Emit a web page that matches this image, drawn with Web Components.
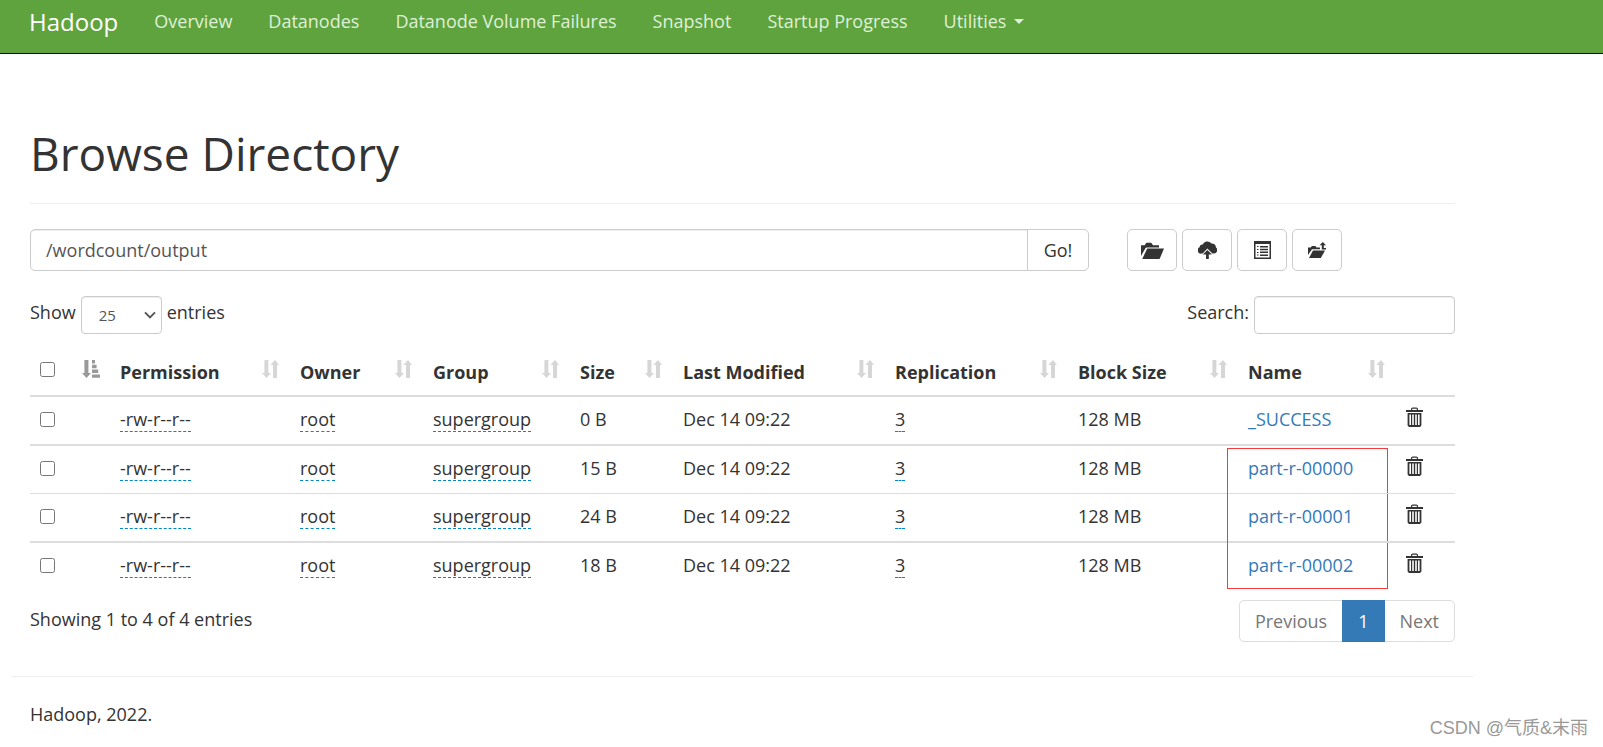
<!DOCTYPE html>
<html lang="en">
<head>
<meta charset="utf-8">
<meta name="viewport" content="width=device-width, initial-scale=1">
<title>Browsing HDFS</title>
<style>
  :root {
    --text: #333;
    --line: #ddd;
    --control: #ccc;
    --link: #337ab7;
    --brand: #5fa33e;
  }
  body {
    margin: 0;
    background: #fff;
    color: var(--text);
    font: 18px/27px "Open Sans", "Noto Sans", "Noto Sans CJK SC", sans-serif;
  }
</style>
</head>
<body>
<hdfs-app></hdfs-app>

<script>
const define = (name, html, setup) => {
  const template = document.createElement('template');
  template.innerHTML = html;
  customElements.define(name, class extends HTMLElement {
    constructor() {
      super();
      this.attachShadow({ mode: 'open' }).append(template.content.cloneNode(true));
    }
    connectedCallback() {
      if (setup) setup(this, this.shadowRoot);
    }
  });
};

/* Icon set: name -> [width, height, markup] */
const ICONS = {
  folder: [23, 17, '<path d="M0 14V3.2h3.6L5.4.8h4.8L12 3.2h6v2.2H5.6L4.6 6 0 14z"/><path d="M6.2 6.6H23L18.6 17H1.2z"/>'],
  upload: [19, 18, '<path d="M3.3 12.6A3.3 3.3 0 0 1 1.6 6.3 3 3 0 0 1 4.6 3.4 5.3 5.3 0 0 1 13.6 2.6 4.4 4.4 0 0 1 18 6.6a3.4 3.4 0 0 1-2 6L14.4 12.6 9.4 7.4 4.6 12.6z"/><path d="M9.4 9L14 13.6h-3.2V18H8v-4.4H4.8z"/>'],
  list: [17, 18, '<path fill-rule="evenodd" d="M0 0h17v18H0zM1.5 3v13.5h14V3z"/><path d="M3 5h1.5v1H3zM6 5h8v1.5H6zM3 8h1.5v1H3zM6 7.8h8v1.5H6zM3 11h1.5v1H3zM6 10.6h8v1.5H6zM3 13.6h1.5v1H3zM6 13.4h8v1.5H6z"/>'],
  move: [19, 16, '<path d="M0 13V5.6h2.6L4 4h3.4l1.2 1.6H12v1.6H4L0 13z"/><path d="M5 8.6h12L12.8 16H1z"/><path d="M14.8 0l3.2 3.2h-2.2V6H18v1.6h-4.2V3.2h-2.2z"/>'],
  trash: [17, 20, '<path d="M0 3h5V1.6L6.4.4h4.2L12 1.6V3h5v2H0zM6.2 3h4.6V1.8H6.2z" fill-rule="evenodd"/><path fill-rule="evenodd" d="M1.6 6h13.8v12.6L14 20H3l-1.4-1.4zM3.4 7.4v10.6h1.6v-10.6zM6.2 7.4v10.6h1.6v-10.6zM9.2 7.4v10.6h1.6v-10.6zM12 7.4v10.6h1.6v-10.6z"/>'],
  sort: [17, 18, '<path d="M2.4 0h4v13H9L4.5 18 0 13h2.4z"/><path d="M11 18V5H8.4L13 0l4 5h-2v13z"/>'],
  sorted: [18, 18, '<path d="M2.4 0h4v13H9L4.5 18 0 13h2.4z"/><path d="M10 0h3v3.4h-3zM10 4.8h4.6v3.4H10zM10 9.6h6.2V13H10zM10 14.4h8v3.4h-8z"/>'],
  chevron: [12, 8, '<path d="M1 1.4l5 5 5-5" fill="none" stroke="currentColor" stroke-width="2"/>'],
  caret: [10, 5, '<path d="M0 0h10L5 5z"/>']
};

define('glyph-icon', `
  <style>
    :host { display: inline-block; line-height: 0; }
    svg { display: block; fill: currentColor; }
  </style>`,
  (host, root) => {
    const [w, h, art] = ICONS[host.getAttribute('name')];
    root.innerHTML += `<svg width="${w}" height="${h}" viewBox="0 0 ${w} ${h}" aria-hidden="true">${art}</svg>`;
  });

define('nav-link', `
  <style>
    :host { display: block; }
    a { display: flex; align-items: center; gap: 8px; color: #dff0d8; text-decoration: none; white-space: nowrap; }
  </style>
  <a href="#"><slot></slot></a>`);

define('nav-bar', `
  <style>
    :host { display: block; background: var(--brand); border-bottom: 1px solid #080808; }
    nav { display: flex; gap: 36px; padding: 8px 29px 18px; }
    .brand { color: #fff; font-size: 24px; text-decoration: none; }
    .links { display: flex; gap: 36px; }
  </style>
  <nav>
    <a class="brand" href="#">Hadoop</a>
    <div class="links">
      <nav-link>Overview</nav-link>
      <nav-link>Datanodes</nav-link>
      <nav-link>Datanode Volume Failures</nav-link>
      <nav-link>Snapshot</nav-link>
      <nav-link>Startup Progress</nav-link>
      <nav-link>Utilities <glyph-icon name="caret"></glyph-icon></nav-link>
    </div>
  </nav>`);

define('page-title', `
  <style>
    :host { display: block; border-bottom: 1px solid #eee; padding-bottom: 24px; }
    h1 { margin: 0; font-size: 46px; line-height: 52px; font-weight: 400; }
  </style>
  <h1><slot></slot></h1>`);

define('icon-button', `
  <style>
    :host { display: block; }
    button {
      display: flex; align-items: center; justify-content: center;
      width: 50px; height: 42px; padding: 0;
      color: var(--text); background: #fff;
      border: 1px solid var(--control); border-radius: 5px;
    }
  </style>
  <button type="button"></button>`,
  (host, root) => {
    const icon = document.createElement('glyph-icon');
    icon.setAttribute('name', host.getAttribute('icon'));
    const button = root.querySelector('button');
    button.replaceChildren(icon);
    button.setAttribute('aria-label', host.getAttribute('label'));
  });

define('path-bar', `
  <style>
    :host { display: flex; }
    form { display: flex; flex: 1; margin-right: 38px; }
    input {
      flex: 1; min-width: 0; box-sizing: border-box; height: 42px; padding: 0 15px;
      font: inherit; color: #555; background: #fff;
      border: 1px solid var(--control); border-radius: 5px 0 0 5px;
      box-shadow: inset 0 1px 1px rgba(0,0,0,.075);
    }
    form button {
      width: 62px; height: 42px; margin-left: -1px; padding: 0;
      font: inherit; color: var(--text); background: #fff;
      border: 1px solid var(--control); border-radius: 0 5px 5px 0;
    }
    .tools { display: flex; gap: 5px; margin-right: 113px; }
  </style>
  <form>
    <input type="text" value="/wordcount/output" aria-label="Directory">
    <button type="button">Go!</button>
  </form>
  <div class="tools">
    <icon-button icon="folder" label="Create directory"></icon-button>
    <icon-button icon="upload" label="Upload files"></icon-button>
    <icon-button icon="list" label="Cut and paste"></icon-button>
    <icon-button icon="move" label="Parent directory"></icon-button>
  </div>`);

define('table-controls', `
  <style>
    :host { display: flex; justify-content: space-between; }
    label { display: flex; gap: 5px; line-height: 33px; }
    .pick { display: grid; align-items: center; }
    .pick > * { grid-area: 1 / 1; }
    select, input {
      box-sizing: border-box; height: 38px; margin: 0;
      font: inherit; font-size: 15px; color: #555; background: #fff;
      border: 1px solid var(--control); border-radius: 4px;
      box-shadow: inset 0 1px 1px rgba(0,0,0,.075);
    }
    select { appearance: none; width: 81px; padding: 0 17px; }
    input { width: 201px; padding: 0 13px; }
    glyph-icon { justify-self: end; margin-right: 6px; color: #555; pointer-events: none; }
  </style>
  <label>Show
    <span class="pick">
      <select><option>10</option><option selected>25</option><option>50</option><option>100</option></select>
      <glyph-icon name="chevron"></glyph-icon>
    </span>
    entries</label>
  <label>Search: <input type="search"></label>`);

define('file-table', `
  <style>
    :host { display: block; }
    table { width: 100%; table-layout: fixed; border-collapse: separate; border-spacing: 0; }
    th, td { padding: 9px 11px 11px; text-align: left; white-space: nowrap; }
    th { position: relative; padding-top: 13px; padding-bottom: 9px; font-weight: 700; border-bottom: 2px solid var(--line); }
    th:first-child, td:first-child { padding-left: 10px; }
    th:first-child { padding-top: 16px; vertical-align: top; }
    th glyph-icon { position: absolute; top: 14px; right: 10px; color: #d6d6d6; }
    th glyph-icon[name=sorted] { right: 9px; color: #999; }
    tbody tr:nth-child(even) td { border-top: 2px solid var(--line); }
    tbody tr:nth-child(3) td { border-top: 1px solid var(--line); }
    td:last-child { vertical-align: top; }
    input { display: block; width: 15px; height: 15px; margin: 0; }
    .edit { display: inline-block; line-height: 24px; border-bottom: 1px dashed #08c; }
    a { color: var(--link); text-decoration: none; }
    .name { position: relative; }
    .mark {
      position: absolute; top: 2px; left: -10px; box-sizing: border-box;
      width: 161px; height: 141px; border: 1px solid #f53b3b; pointer-events: none;
    }
    td button { display: block; padding: 1px 0; border: 0; background: none; color: var(--text); }
  </style>
  <table>
    <colgroup>
      <col style="width:79px"><col style="width:180px"><col style="width:133px"><col style="width:147px">
      <col style="width:103px"><col style="width:212px"><col style="width:183px"><col style="width:170px">
      <col style="width:158px"><col style="width:60px">
    </colgroup>
    <thead><tr></tr></thead>
    <tbody></tbody>
  </table>`,
  (host, root) => {
    const heads = ['Permission', 'Owner', 'Group', 'Size', 'Last Modified', 'Replication', 'Block Size', 'Name'];
    const files = [['_SUCCESS', '0 B'], ['part-r-00000', '15 B'], ['part-r-00001', '24 B'], ['part-r-00002', '18 B']];
    root.querySelector('thead tr').innerHTML =
      '<th><input type="checkbox" aria-label="Select all"><glyph-icon name="sorted"></glyph-icon></th>' +
      heads.map(h => `<th>${h}<glyph-icon name="sort"></glyph-icon></th>`).join('') + '<th></th>';
    root.querySelector('tbody').innerHTML = files.map(([name, size], i) => `
      <tr>
        <td><input type="checkbox" aria-label="Select ${name}"></td>
        <td><span class="edit">-rw-r--r--</span></td>
        <td><span class="edit">root</span></td>
        <td><span class="edit">supergroup</span></td>
        <td>${size}</td>
        <td>Dec 14 09:22</td>
        <td><span class="edit">3</span></td>
        <td>128 MB</td>
        <td class="name"><a href="#">${name}</a>${i === 1 ? '<span class="mark"></span>' : ''}</td>
        <td><button type="button" aria-label="Delete ${name}"><glyph-icon name="trash"></glyph-icon></button></td>
      </tr>`).join('');
  });

define('table-pager', `
  <style>
    :host { display: flex; justify-content: space-between; }
    p { margin: 0; padding-top: 6px; }
    nav { display: flex; }
    a {
      box-sizing: border-box; height: 42px; padding: 7px 15px; margin-left: -1px;
      color: #777; background: #fff; border: 1px solid var(--line); text-decoration: none;
    }
    a:first-child { border-radius: 5px 0 0 5px; }
    a:last-child { border-radius: 0 5px 5px 0; }
    a.current { position: relative; color: #fff; background: var(--link); border-color: var(--link); }
  </style>
  <p>Showing 1 to 4 of 4 entries</p>
  <nav aria-label="Pages">
    <a href="#">Previous</a><a class="current" href="#" aria-current="page">1</a><a href="#">Next</a>
  </nav>`);

define('page-footer', `
  <style>
    :host { display: block; border-top: 1px solid #eee; padding: 24px 19px 18px; }
    p { margin: 0; }
  </style>
  <p><slot></slot></p>`);

define('water-mark', `
  <style>
    :host {
      position: absolute; right: 15px; bottom: 4px;
      font: 18px/27px "Liberation Sans", "Noto Sans CJK SC", sans-serif; color: #999;
    }
  </style>
  <slot></slot>`);

define('hdfs-app', `
  <style>
    :host { display: block; position: relative; }
    main { max-width: 1425px; padding: 73px 30px 34px; }
    path-bar { margin-top: 25px; }
    table-controls { margin-top: 25px; }
    file-table { margin-top: 12px; }
    table-pager { margin-top: 10px; }
    page-footer { max-width: 1424px; margin-left: 11px; }
  </style>
  <nav-bar></nav-bar>
  <main>
    <page-title>Browse Directory</page-title>
    <path-bar></path-bar>
    <table-controls></table-controls>
    <file-table></file-table>
    <table-pager></table-pager>
  </main>
  <page-footer>Hadoop, 2022.</page-footer>
  <water-mark>CSDN @气质&amp;末雨</water-mark>`);
</script>
</body>
</html>
